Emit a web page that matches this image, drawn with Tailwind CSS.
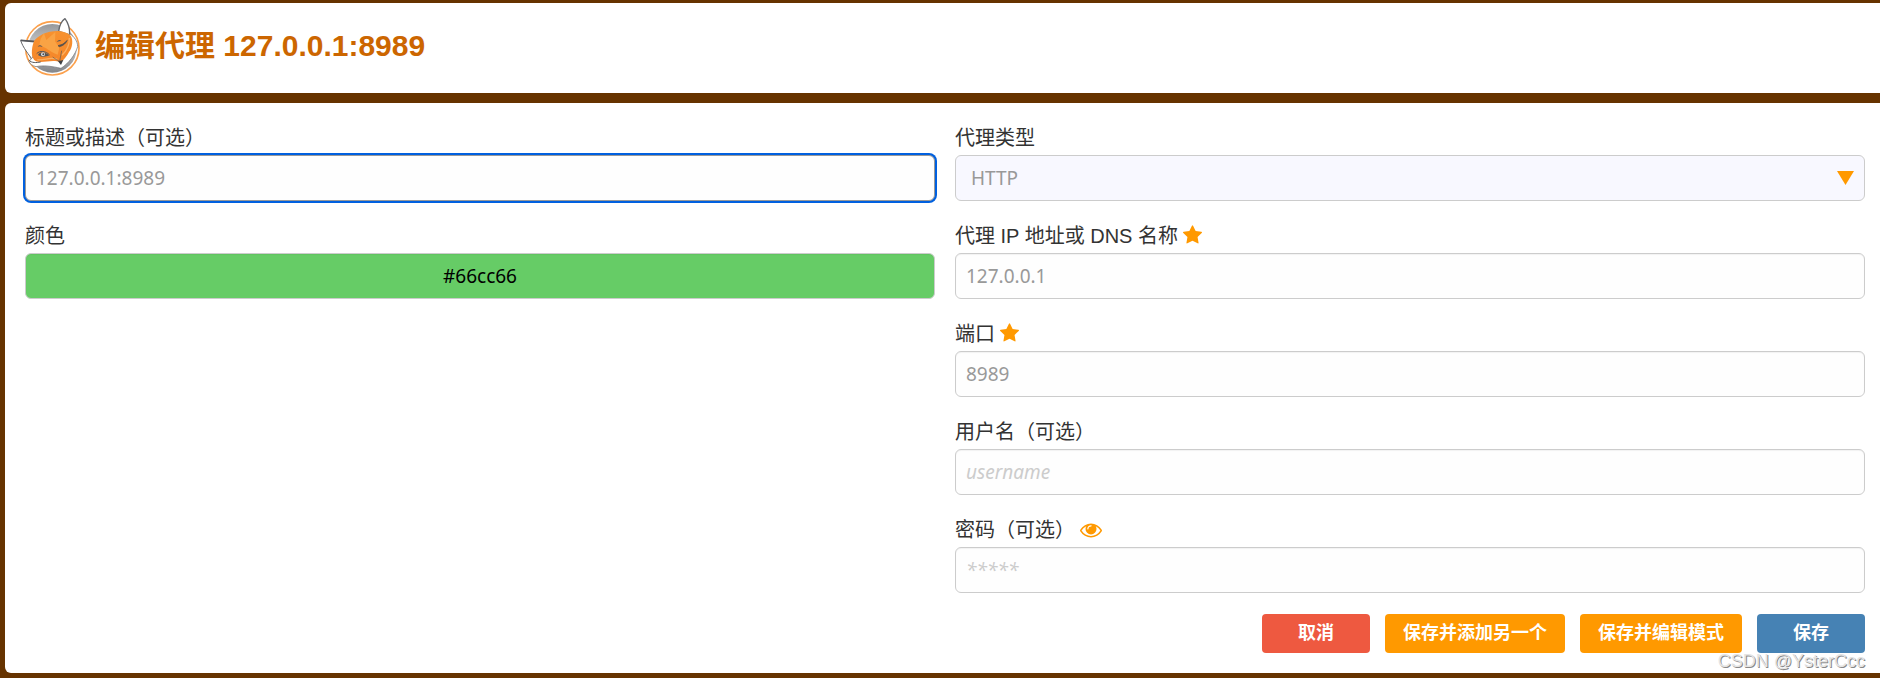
<!DOCTYPE html>
<html lang="zh-CN">
<head>
<meta charset="utf-8">
<meta name="viewport" content="width=device-width, initial-scale=1">
<title>编辑代理 127.0.0.1:8989</title>
<script src="https://cdn.jsdelivr.net/npm/@tailwindcss/browser@4"></script>
</head>
<body class="flex min-h-screen flex-col gap-[10px] bg-[#663300] pt-[3px] pb-[5px] pl-[5px] font-['Liberation_Sans','Noto_Sans_CJK_SC',sans-serif] text-[20px] text-[#333]">
  <header class="flex h-[90px] items-start gap-[15px] rounded-l-md bg-white px-[15px] pt-[14px]">
    <svg class="size-[60px] shrink-0" viewBox="60 51 180 180" aria-hidden="true">
      <defs>
        <linearGradient id="disc" x1="0" y1="0" x2="0" y2="1"><stop offset="0" stop-color="#96989b"/><stop offset=".45" stop-color="#c9cacc"/><stop offset="1" stop-color="#84868a"/></linearGradient>
        <linearGradient id="fur" x1="0" y1="0" x2="0" y2="1"><stop offset="0" stop-color="#f7922f"/><stop offset="1" stop-color="#f5862a"/></linearGradient>
      </defs>
      <circle cx="157" cy="145" r="80" fill="#fff" stroke="#fba04c" stroke-width="5"/>
      <circle cx="157" cy="145" r="73" fill="url(#disc)"/>
      <path d="M62 121 L104 124 L98 180 C88 166 68 142 62 121Z" fill="#fff" stroke="#66686c" stroke-width="3" stroke-linejoin="round"/>
      <path d="M176 94 C178 78 186 62 195 56 C204 68 210 85 209 105Z" fill="#fff" stroke="#66686c" stroke-width="4" stroke-linejoin="round"/>
      <path d="M87 184 C91 193 97 197 108 200 C130 195 156 199 183 205 C206 190 226 164 233 140 C233 124 223 110 209 101 L190 170 L98 172Z" fill="#fff" stroke="#66686c" stroke-width="2" stroke-linejoin="round"/>
      <path d="M62 121 L104 125" fill="none" stroke="#55575b" stroke-width="5"/>
      <path d="M102 124 C112 107 142 92 176 93 C190 94 204 99 212 107 C220 119 218 142 207 156 C200 170 191 180 182 187 C158 177 129 190 108 184 C92 176 93 148 102 124Z" fill="url(#fur)"/>
      <path d="M122 116 L132 100 L139 120 L166 96 L165 124 L178 143 L173 164 C153 157 143 147 137 144 L118 135Z" fill="#f9a344"/>
      <path d="M208 114 C209 135 200 152 186 166 M112 179 C132 183 151 168 172 178" fill="none" stroke="#fbb063" stroke-width="4"/>
      <path d="M114 165 C118 155 132 153 148 166 C136 172 122 172 114 165Z" fill="#55575b"/>
      <path d="M110 161 C119 151 137 152 149 165" fill="none" stroke="#55575b" stroke-width="3"/>
      <circle cx="129" cy="163" r="6" fill="#dfe1e3"/><circle cx="130" cy="163" r="3" fill="#4b4d50"/>
      <path d="M113 140 Q121 131 128 141 L120 139Z M170 126 Q177 115 184 123 L177 124Z" fill="#55575b"/>
      <path d="M174 137 Q190 135 202 121 Q194 137 178 140Z" fill="#4b4d50" stroke="#4b4d50" stroke-width="2"/>
      <path d="M158 171 C166 177 172 181 179 184 L185 152" fill="none" stroke="#55575b" stroke-width="2"/>
      <path d="M174 184 L190 180 L183 195Z" fill="#3f4144"/>
      <path d="M86 180 C96 190 108 188 122 186" fill="none" stroke="#55575b" stroke-width="3"/>
    </svg>
    <h1 class="pt-[7px] text-[30px] leading-[44px] font-bold text-[#cc6600]">编辑代理 127.0.0.1:8989</h1>
  </header>

  <main class="grow rounded-l-md bg-white py-[20px] pr-[15px] pl-[20px]">
    <form>
      <div class="grid grid-cols-2 gap-x-[20px]">
        <div class="flex flex-col gap-[20px]">
          <div class="flex flex-col">
            <label for="title" class="h-[32px] leading-[30px]">标题或描述（可选）</label>
            <input id="title" type="text" value="127.0.0.1:8989" class="h-[46px] w-full rounded-md border border-[#999] bg-[#fefefe] px-[10px] font-['Noto_Sans',sans-serif] text-[19px] text-[#999] ring-2 ring-[#0060df] outline-none">
          </div>
          <div class="flex flex-col">
            <label for="color" class="h-[32px] leading-[30px]">颜色</label>
            <input id="color" type="text" value="#66cc66" class="h-[46px] w-full rounded-md border border-[#ccc] bg-[#66cc66] px-[10px] text-center font-['Noto_Sans',sans-serif] text-[19px] text-black inset-shadow-xs outline-none">
          </div>
        </div>

        <div class="flex flex-col gap-[20px]">
          <div class="flex flex-col">
            <label for="type" class="h-[32px] leading-[30px]">代理类型</label>
            <div class="relative">
              <select id="type" class="block h-[46px] w-full appearance-none rounded-md border border-[#ccc] bg-[#f8f8ff] px-[15px] font-['Noto_Sans',sans-serif] text-[19px] text-[#999] outline-none"><option>HTTP</option></select>
              <svg class="pointer-events-none absolute top-[16px] right-[11px] h-[14px] w-[17px]" viewBox="0 0 17 14" aria-hidden="true"><path d="M0 0H17L8.500 14Z" fill="#ff9900"/></svg>
            </div>
          </div>
          <div class="flex flex-col">
            <label for="address" class="flex h-[32px] gap-[5px] leading-[30px]">代理 IP 地址或 DNS 名称
              <svg class="mt-[4px] size-[19px]" viewBox="0 0 1664 1600" fill="#ff9900" aria-hidden="true"><path d="M1664 615q0 22-26 48l-363 354 86 500q1 7 1 20 0 21-10.500 35.500T1321 1587q-19 0-40-12l-449-236-449 236q-22 12-40 12-21 0-31.500-14.500T301 1537q0-6 2-20l86-500L25 663Q0 636 0 615q0-37 56-46l502-73L783 41q19-41 49-41t49 41l225 455 502 73q56 9 56 46z"/></svg>
            </label>
            <input id="address" type="text" value="127.0.0.1" class="h-[46px] w-full rounded-md border border-[#ccc] bg-[#fefefe] px-[10px] font-['Noto_Sans',sans-serif] text-[19px] text-[#999] inset-shadow-xs outline-none">
          </div>
          <div class="flex flex-col">
            <label for="port" class="flex h-[32px] gap-[5px] leading-[30px]">端口
              <svg class="mt-[4px] size-[19px]" viewBox="0 0 1664 1600" fill="#ff9900" aria-hidden="true"><path d="M1664 615q0 22-26 48l-363 354 86 500q1 7 1 20 0 21-10.500 35.500T1321 1587q-19 0-40-12l-449-236-449 236q-22 12-40 12-21 0-31.500-14.500T301 1537q0-6 2-20l86-500L25 663Q0 636 0 615q0-37 56-46l502-73L783 41q19-41 49-41t49 41l225 455 502 73q56 9 56 46z"/></svg>
            </label>
            <input id="port" type="text" value="8989" class="h-[46px] w-full rounded-md border border-[#ccc] bg-[#fefefe] px-[10px] font-['Noto_Sans',sans-serif] text-[19px] text-[#999] inset-shadow-xs outline-none">
          </div>
          <div class="flex flex-col">
            <label for="username" class="h-[32px] leading-[30px]">用户名（可选）</label>
            <input id="username" type="text" placeholder="username" class="h-[46px] w-full rounded-md border border-[#ccc] bg-[#fefefe] px-[10px] font-['Noto_Sans',sans-serif] text-[19px] text-[#999] inset-shadow-xs outline-none placeholder:text-[#ccc] placeholder:italic">
          </div>
          <div class="flex flex-col">
            <div class="flex h-[32px] gap-[5px] leading-[30px]">
              <label for="password">密码（可选）</label>
              <button type="button" aria-label="显示密码" class="flex h-[30px] items-center">
                <svg class="h-[15px] w-[22px]" viewBox="0 0 1792 1152" fill="#ff9900" aria-hidden="true"><path d="M1664 576q-152-236-381-353 61 104 61 225 0 185-131.500 316.500T896 896 579.500 764.500 448 448q0-121 61-225-229 117-381 353 133 205 333.500 326.500T896 1024t434.500-121.500T1664 576zM944 192q0-20-14-34t-34-14q-125 0-214.500 89.500T592 448q0 20 14 34t34 14 34-14 14-34q0-86 61-147t147-61q20 0 34-14t14-34zm848 384q0 34-20 69-140 230-376.500 368.500T896 1152t-499.500-139T20 645Q0 610 0 576t20-69q140-229 376.500-368T896 0t499.500 139T1772 507q20 35 20 69z"/></svg>
              </button>
            </div>
            <input id="password" type="password" placeholder="*****" class="h-[46px] w-full rounded-md border border-[#ccc] bg-[#fefefe] px-[10px] font-['Noto_Sans',sans-serif] text-[19px] text-[#999] inset-shadow-xs outline-none placeholder:text-[#ccc] placeholder:italic">
          </div>
        </div>
      </div>

      <div class="mt-[21px] flex justify-end gap-[15px] text-[18px] leading-[39px] font-bold text-white">
        <button type="button" class="h-[39px] min-w-[108px] rounded-sm bg-[#ee5940] px-[18px]">取消</button>
        <button type="button" class="h-[39px] rounded-sm bg-[#ff9900] px-[18px]">保存并添加另一个</button>
        <button type="button" class="h-[39px] rounded-sm bg-[#ff9900] px-[18px]">保存并编辑模式</button>
        <button type="submit" class="h-[39px] min-w-[108px] rounded-sm bg-[#4682b4] px-[18px]">保存</button>
      </div>
    </form>
  </main>
  <p class="pointer-events-none absolute right-[15px] bottom-[6px] text-[18px] leading-[22px] text-[#e4e4e4] [text-shadow:1px_1px_0_#888]">CSDN @YsterCcc</p>
</body>
</html>
